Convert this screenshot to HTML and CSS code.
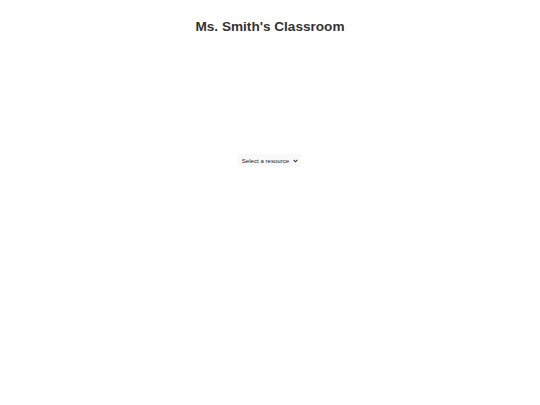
FILE: index.html
```html
<!DOCTYPE html>
<html>
<head>
<meta charset="utf-8">
<link rel="stylesheet" href="styles.css">
</head>
<body>
<div class="page">
  <h1 class="title">Ms. Smith's Classroom</h1>
  <div class="center">
    <div class="select">
      <span class="label">Select a resource</span>
      <svg class="chev" width="5" height="4" viewBox="0 0 5 4"><path d="M0.6 0.8 L2.5 2.8 L4.4 0.8" fill="none" stroke="#333" stroke-width="1.1"/></svg>
    </div>
  </div>
</div>
</body>
</html>
```
FILE: styles.css
```css
html, body { margin: 0; padding: 0; background: #fff; }
.page {
  font-family: "Liberation Sans", Arial, sans-serif;
  color: #333;
  display: flex;
  flex-direction: column;
  align-items: center;
  height: 405px;
}
.title {
  margin: 18px 0 0 0;
  font-size: 13.6px;
  font-weight: bold;
  line-height: 17px;
}
.center {
  margin-top: 119px;
  display: flex;
  justify-content: center;
}
.select {
  display: flex;
  align-items: center;
  gap: 4px;
  font-size: 6.1px;
  color: #222;
  padding: 3px 4px;
  background: #f9f9f9;
  border-radius: 2px;
}
.chev { display: block; }
```
